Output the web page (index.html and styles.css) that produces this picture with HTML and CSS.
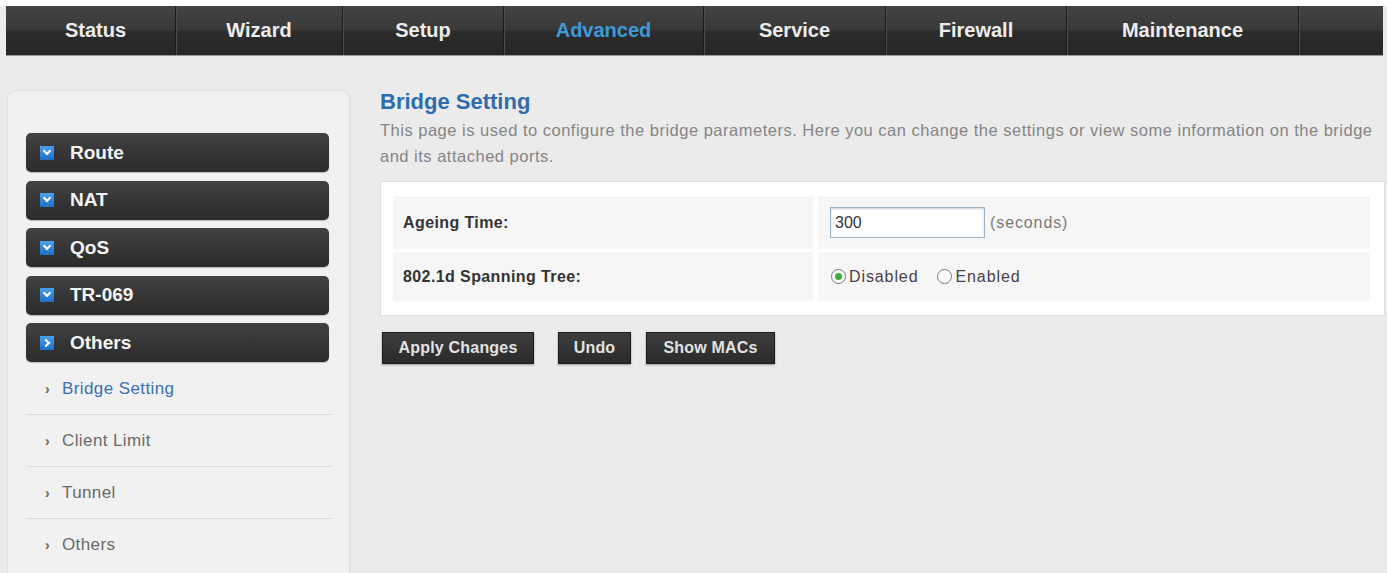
FILE: index.html
```html
<!DOCTYPE html>
<html lang="en">
<head>
  <meta charset="UTF-8" />
  <title>Bridge Setting</title>
  <link rel="stylesheet" href="styles.css">
</head>
<body>
  <div id="menu">
    <a class="tab t-status">Status</a>
    <a class="tab t-wizard">Wizard</a>
    <a class="tab t-setup">Setup</a>
    <a class="tab t-adv activo">Advanced</a>
    <a class="tab t-service">Service</a>
    <a class="tab t-firewall">Firewall</a>
    <a class="tab t-maint">Maintenance</a>
    <a class="tab t-rest"></a>
  </div>

  <div id="cuerpo">
    <div id="lateral">
      <div class="grupo"><span class="ico abajo"></span>Route</div>
      <div class="grupo"><span class="ico abajo"></span>NAT</div>
      <div class="grupo"><span class="ico abajo"></span>QoS</div>
      <div class="grupo"><span class="ico abajo"></span>TR-069</div>
      <div class="grupo"><span class="ico derecha"></span>Others</div>
      <ul class="sub">
        <li class="actual"><span class="flecha">&#8250;</span>Bridge Setting</li>
        <li><span class="flecha">&#8250;</span>Client Limit</li>
        <li><span class="flecha">&#8250;</span>Tunnel</li>
        <li class="ultimo"><span class="flecha">&#8250;</span>Others</li>
      </ul>
    </div>

    <div id="principal">
      <h2>Bridge Setting</h2>
      <p class="desc">This page is used to configure the bridge parameters. Here you can change the settings or view some information on the bridge and its attached ports.</p>

      <div class="panel">
        <div class="fila">
          <div class="etiqueta">Ageing Time:</div>
          <div class="valor"><input type="text" value="300" class="caja"> <span class="unidad">(seconds)</span></div>
        </div>
        <div class="fila">
          <div class="etiqueta">802.1d Spanning Tree:</div>
          <div class="valor">
            <span class="radio marcado"></span><span class="opcion">Disabled</span>
            <span class="radio"></span><span class="opcion">Enabled</span>
          </div>
        </div>
      </div>

      <div id="acciones">
        <button class="b-apply">Apply Changes</button>
        <button class="b-undo">Undo</button>
        <button>Show MACs</button>
      </div>
    </div>
  </div>
</body>
</html>
```

FILE: styles.css
```css
body {
  margin: 0;
  background: #ebebeb;
  font-family: "Liberation Sans", Arial, sans-serif;
  overflow: hidden;
  height: 573px;
  border-top: 6px solid #fff;
}

#menu {
  display: flex;
  margin: 0 4px 0 6px;
  height: 49px;
  background: linear-gradient(#434343, #393939 48%, #2c2c2c 52%, #262626);
  border-bottom: 1px solid #9a9a9a;
}
.tab {
  color: #ececec;
  font-size: 20px;
  font-weight: bold;
  text-align: center;
  line-height: 49px;
  border-right: 1px solid #1b1b1b;
  box-shadow: 1px 0 0 #4d4d4d;
}
.t-status { width: 170px; padding-left: 10px; box-sizing: border-box; }
.t-wizard { width: 166px; }
.t-setup { width: 160px; }
.t-adv { width: 199px; }
.t-service { width: 181px; }
.t-firewall { width: 180px; }
.t-maint { width: 231px; }
.t-rest { flex: 1; border-right: none; box-shadow: none; }
.activo { color: #3d9ad8; }

#cuerpo {
  display: flex;
  align-items: flex-start;
}

#lateral {
  width: 343px;
  box-sizing: border-box;
  margin: 34px 0 0 7px;
  padding: 42px 20px 0 18px;
  height: 500px;
  background: #f1f1f1;
  border: 1px solid #e0e0e0;
  border-radius: 9px;
}
.grupo {
  display: flex;
  align-items: center;
  height: 39px;
  margin-bottom: 8.5px;
  padding-left: 14px;
  border-radius: 5px;
  background: linear-gradient(#424242, #353535 50%, #2c2c2c);
  box-shadow: 0 1px 1px #bbb;
  color: #f4f4f4;
  font-size: 19px;
  font-weight: bold;
}
.ico {
  width: 14px;
  height: 14px;
  margin-right: 16px;
  background: linear-gradient(#4aa0ec, #1f6fc6);
  position: relative;
}
.ico::after {
  content: "";
  position: absolute;
  width: 4px;
  height: 4px;
  border-right: 2px solid #fff;
  border-bottom: 2px solid #fff;
}
.abajo::after { left: 4px; top: 2px; transform: rotate(45deg); }
.derecha::after { left: 3px; top: 4px; transform: rotate(-45deg); }

.sub {
  list-style: none;
  margin: -8px 0 0 0;
  padding: 0;
  width: 307px;
}
.sub li {
  height: 51px;
  line-height: 51px;
  border-bottom: 1px solid #dcdcdc;
  color: #6a6a6a;
  font-size: 17px;
  letter-spacing: 0.4px;
  padding-left: 19px;
}
.sub li.ultimo { border-bottom: none; }
.sub li.actual { color: #3b6fb3; }
.flecha {
  display: inline-block;
  width: 17px;
  color: #666;
  font-weight: bold;
  font-size: 14px;
}

#principal {
  width: 1005px;
  margin: 33px 0 0 30px;
}
h2 {
  margin: 0;
  font-size: 22px;
  line-height: 26px;
  color: #2f6cae;
}
.desc {
  margin: 2px 0 0 0;
  font-size: 16.5px;
  letter-spacing: 0.5px;
  line-height: 26px;
  color: #858585;
}

.panel {
  margin-top: 12px;
  background: #fff;
  border: 1px solid #dedede;
  padding: 14px 14px 14px 12px;
  display: flex;
  flex-direction: column;
  gap: 3px;
}
.fila {
  display: grid;
  grid-template-columns: 420px 1fr;
  gap: 5px;
}
.fila:first-child { height: 53px; }
.fila:last-child { height: 49px; }
.etiqueta, .valor {
  background: #f6f6f6;
  display: flex;
  align-items: center;
}
.etiqueta {
  padding-left: 10px;
  font-size: 16px;
  letter-spacing: 0.4px;
  font-weight: bold;
  color: #333;
}
.valor {
  padding-left: 12px;
  font-size: 16px;
  letter-spacing: 0.9px;
  color: #444;
}
.caja {
  width: 155px;
  height: 31px;
  box-sizing: border-box;
  border: 1px solid #9fb0bf;
  box-shadow: inset 0 1px 2px #ccd;
  font-family: "Liberation Sans", Arial, sans-serif;
  font-size: 16px;
  color: #333;
  padding: 0 4px;
  margin: 0 5px 0 0;
}
.unidad { color: #7a7a7a; }
.radio {
  width: 13px;
  height: 13px;
  border: 1px solid #7b7b7b;
  border-radius: 50%;
  background: #fafafa;
  margin: 0 3px 0 1px;
  position: relative;
}
.radio.marcado::after {
  content: "";
  position: absolute;
  left: 3px;
  top: 3px;
  width: 7px;
  height: 7px;
  border-radius: 50%;
  background: #3cae3c;
}
.opcion { margin-right: 18px; color: #4a3f4a; }

#acciones {
  margin-top: 16px;
  display: flex;
}
button {
  height: 32px;
  padding: 0 10px;
  margin: 0 13px 0 2px;
  background: linear-gradient(#3e3e3e, #2a2a2a);
  border: 1px solid #1b1b1b;
  box-shadow: 0 1px 2px #999;
  color: #e2e2e2;
  font-family: "Liberation Sans", Arial, sans-serif;
  font-size: 16px;
  font-weight: bold;
  letter-spacing: 0.2px;
}
.b-apply { width: 152px; margin-right: 22px; }
.b-undo { width: 73px; }
button:last-child { width: 129px; }
```
